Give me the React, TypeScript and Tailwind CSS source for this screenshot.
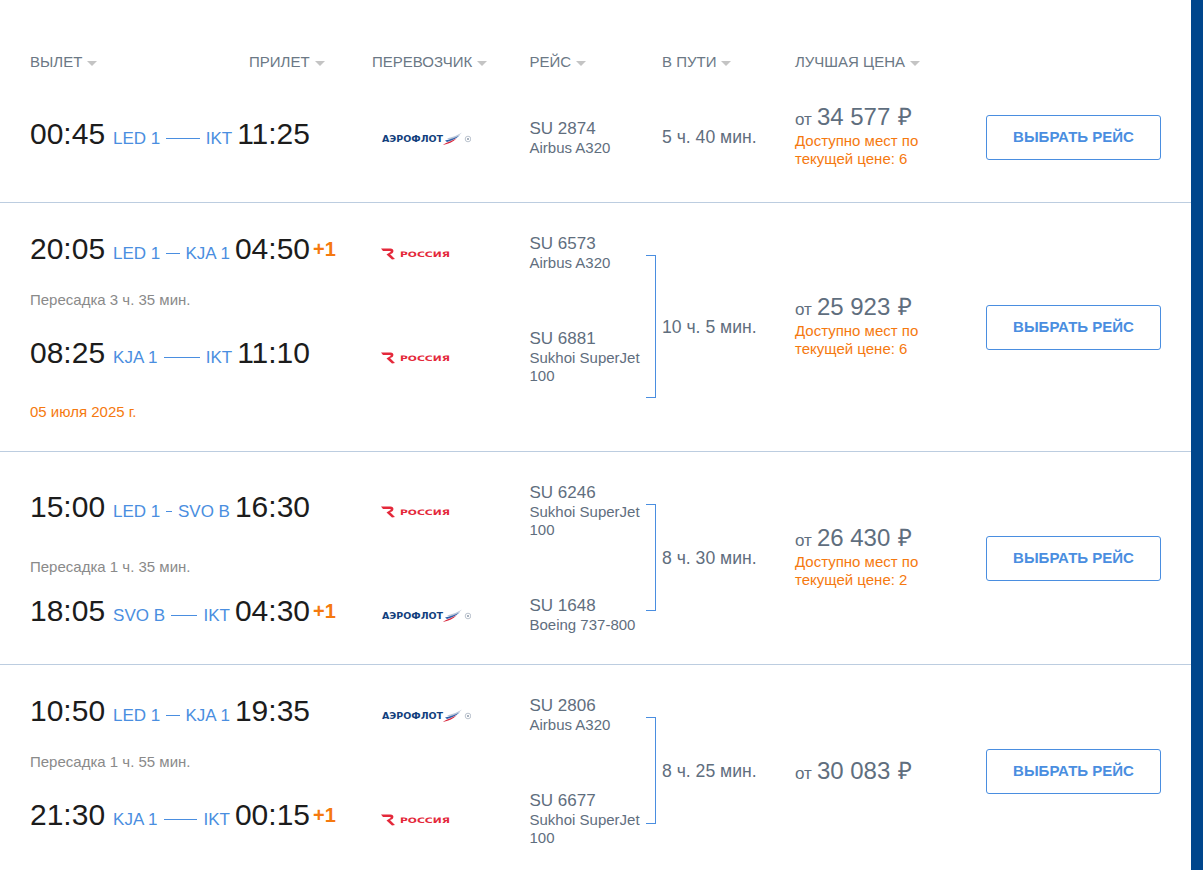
const aeroflot = "aeroflot";
const rossiya = "rossiya";

type Leg = {
  dep: string;
  from: string;
  to: string;
  arr: string;
  plus?: boolean;
  logo: string;
  flight: string;
  plane: string[];
};

type Trip = {
  legs: Leg[];
  transfer?: string;
  date?: string;
  duration: string;
  price: string;
  seats?: string;
};

const trips: Trip[] = [
  {
    legs: [
      { dep: "00:45", from: "LED 1", to: "IKT", arr: "11:25", logo: aeroflot, flight: "SU 2874", plane: ["Airbus A320"] },
    ],
    duration: "5 ч. 40 мин.",
    price: "34 577",
    seats: "6",
  },
  {
    legs: [
      { dep: "20:05", from: "LED 1", to: "KJA 1", arr: "04:50", plus: true, logo: rossiya, flight: "SU 6573", plane: ["Airbus A320"] },
      { dep: "08:25", from: "KJA 1", to: "IKT", arr: "11:10", logo: rossiya, flight: "SU 6881", plane: ["Sukhoi SuperJet", "100"] },
    ],
    transfer: "Пересадка 3 ч. 35 мин.",
    date: "05 июля 2025 г.",
    duration: "10 ч. 5 мин.",
    price: "25 923",
    seats: "6",
  },
  {
    legs: [
      { dep: "15:00", from: "LED 1", to: "SVO B", arr: "16:30", logo: rossiya, flight: "SU 6246", plane: ["Sukhoi SuperJet", "100"] },
      { dep: "18:05", from: "SVO B", to: "IKT", arr: "04:30", plus: true, logo: aeroflot, flight: "SU 1648", plane: ["Boeing 737-800"] },
    ],
    transfer: "Пересадка 1 ч. 35 мин.",
    duration: "8 ч. 30 мин.",
    price: "26 430",
    seats: "2",
  },
  {
    legs: [
      { dep: "10:50", from: "LED 1", to: "KJA 1", arr: "19:35", logo: aeroflot, flight: "SU 2806", plane: ["Airbus A320"] },
      { dep: "21:30", from: "KJA 1", to: "IKT", arr: "00:15", plus: true, logo: rossiya, flight: "SU 6677", plane: ["Sukhoi SuperJet", "100"] },
    ],
    transfer: "Пересадка 1 ч. 55 мин.",
    duration: "8 ч. 25 мин.",
    price: "30 083",
  },
];

const columns = [
  { label: "ВЫЛЕТ", width: "w-[219px]" },
  { label: "ПРИЛЕТ", width: "w-[123px]" },
  { label: "ПЕРЕВОЗЧИК", width: "w-[157.5px]" },
  { label: "РЕЙС", width: "w-[132.5px]" },
  { label: "В ПУТИ", width: "w-[133px]" },
  { label: "ЛУЧШАЯ ЦЕНА", width: "w-[200px]" },
];

function AeroflotLogo() {
  return (
    <svg width="90" height="14" viewBox="0 0 90 14">
      <text x="1" y="10" fontFamily="DejaVu Sans" fontWeight="700" fontSize="8" fill="#123f7d" textLength="61" lengthAdjust="spacingAndGlyphs">
        АЭРОФЛОТ
      </text>
      <path d="M66 6.5 C72 5 77 3 81 0.5 C78 4 74 6 69 7.5 Z" fill="#b9c6d8" />
      <path d="M64 8.5 C70 7.5 75 5.5 79 3 C76 6.5 71 8.5 66 10 Z" fill="#2f5fa8" />
      <path d="M62 13 C64 11 70 9.5 76 6 C72 10 67 12 62 13 Z" fill="#d8263c" />
      <circle cx="87" cy="7" r="2.8" fill="none" stroke="#a9b4c2" strokeWidth="0.8" />
      <circle cx="87" cy="7" r="1" fill="#8b99aa" />
    </svg>
  );
}

function RossiyaLogo() {
  return (
    <svg width="90" height="14" viewBox="0 0 90 14">
      <path d="M0 1.5 H9.5 C13.5 1.5 13.5 6.5 9 7 L14 12 L11 12.5 L5.5 7.5 L9.5 5 C10 4.5 9.5 4 8.5 4 H2 Z" fill="#e4283a" />
      <text x="19" y="9.8" fontFamily="DejaVu Sans" fontWeight="700" fontSize="7.5" fill="#e4283a" textLength="50" lengthAdjust="spacingAndGlyphs">
        РОССИЯ
      </text>
    </svg>
  );
}

function LegRow({ leg }: { leg: Leg }) {
  return (
    <div className="flex items-center">
      <div className="flex h-[38px] w-[280px] items-baseline text-[30px] leading-[30px] text-[#1c1c1c]">
        <span>{leg.dep}</span>
        <span className="ml-[8px] text-[17px] text-[#4a8ee0]">{leg.from}</span>
        <span className="mx-[6px] h-px flex-1 -translate-y-[5px] bg-[#4a8ee0]" />
        <span className="mr-[5px] text-[17px] text-[#4a8ee0]">{leg.to}</span>
        <span>{leg.arr}</span>
      </div>
      <div className="w-[62px] pb-[8px] pl-[3px] text-[20px] leading-[30px] font-bold text-[#f5790f]">
        {leg.plus && "+1"}
      </div>
      <div className="flex w-[157.5px] pt-[2px] pl-[9px]">
        {leg.logo === aeroflot ? <AeroflotLogo /> : <RossiyaLogo />}
      </div>
      <div className="w-[116.5px] pt-px text-[#5f6e7e]">
        <div className="text-[17px] leading-[20px]">{leg.flight}</div>
        {leg.plane.map((line) => (
          <div key={line} className="text-[15px] leading-[18px] whitespace-nowrap">
            {line}
          </div>
        ))}
      </div>
    </div>
  );
}

function TripRow({ trip }: { trip: Trip }) {
  const connecting = trip.legs.length > 1;
  return (
    <div className="flex items-center border-b border-[#bccde0] py-[30px] pl-[30px]">
      <div className="w-[616px]">
        <LegRow leg={trip.legs[0]} />
        {trip.transfer && (
          <div className="flex h-[56px] items-center text-[15px] text-[#8a8a8a]">{trip.transfer}</div>
        )}
        {trip.legs[1] && <LegRow leg={trip.legs[1]} />}
        {trip.date && <div className="mt-[18px] h-[18px] text-[15px] leading-[18px] text-[#f5790f]">{trip.date}</div>}
      </div>
      <div className={connecting ? "mt-[22px] mb-[23px] w-[10px] self-stretch border-y border-r border-[#4a8ee0]" : "w-[10px]"} />
      <div className="w-[139px] pl-[6px] text-[17.6px] whitespace-nowrap text-[#5f6e7e]">{trip.duration}</div>
      <div className={trip.seats ? "w-[191px] pb-[4px] text-[#5f6e7e]" : "w-[191px] pt-[5px] pb-[4px] text-[#5f6e7e]"}>
        <div className="-mb-[2px] flex items-baseline text-[17px] leading-[28px]">
          от
          <span className="ml-[5px] text-[24px]">{trip.price}</span>
          <span className="ml-[8px] text-[24px]">₽</span>
        </div>
        {trip.seats && (
          <div className="w-[150px] text-[15px] leading-[18px] text-[#f5790f]">
            <div>Доступно мест по</div>
            <div>текущей цене: {trip.seats}</div>
          </div>
        )}
      </div>
      <button className="h-[45px] w-[175px] rounded-[3px] border border-[#4a8ee0] bg-white text-[15px] font-bold text-[#4a8ee0]">
        ВЫБРАТЬ РЕЙС
      </button>
    </div>
  );
}

export default function App() {
  return (
    <div className="flex h-[870px] overflow-hidden bg-white font-['Liberation_Sans',Arial,sans-serif]">
      <div className="w-[1191px]">
        <div className="flex h-[73px] pt-[52px] pl-[30px]">
          {columns.map((col) => (
            <div key={col.label} className={`${col.width} flex h-[21px] items-center text-[15px] text-[#6b7885]`}>
              {col.label}
              <span className="mt-px ml-[5px] h-0 w-0 border-x-[5px] border-t-[5px] border-x-transparent border-t-[#c4c4c4]" />
            </div>
          ))}
        </div>
        {trips.map((trip) => (
          <TripRow key={trip.price} trip={trip} />
        ))}
      </div>
      <div className="w-[12px] bg-[#00468c]" />
    </div>
  );
}
